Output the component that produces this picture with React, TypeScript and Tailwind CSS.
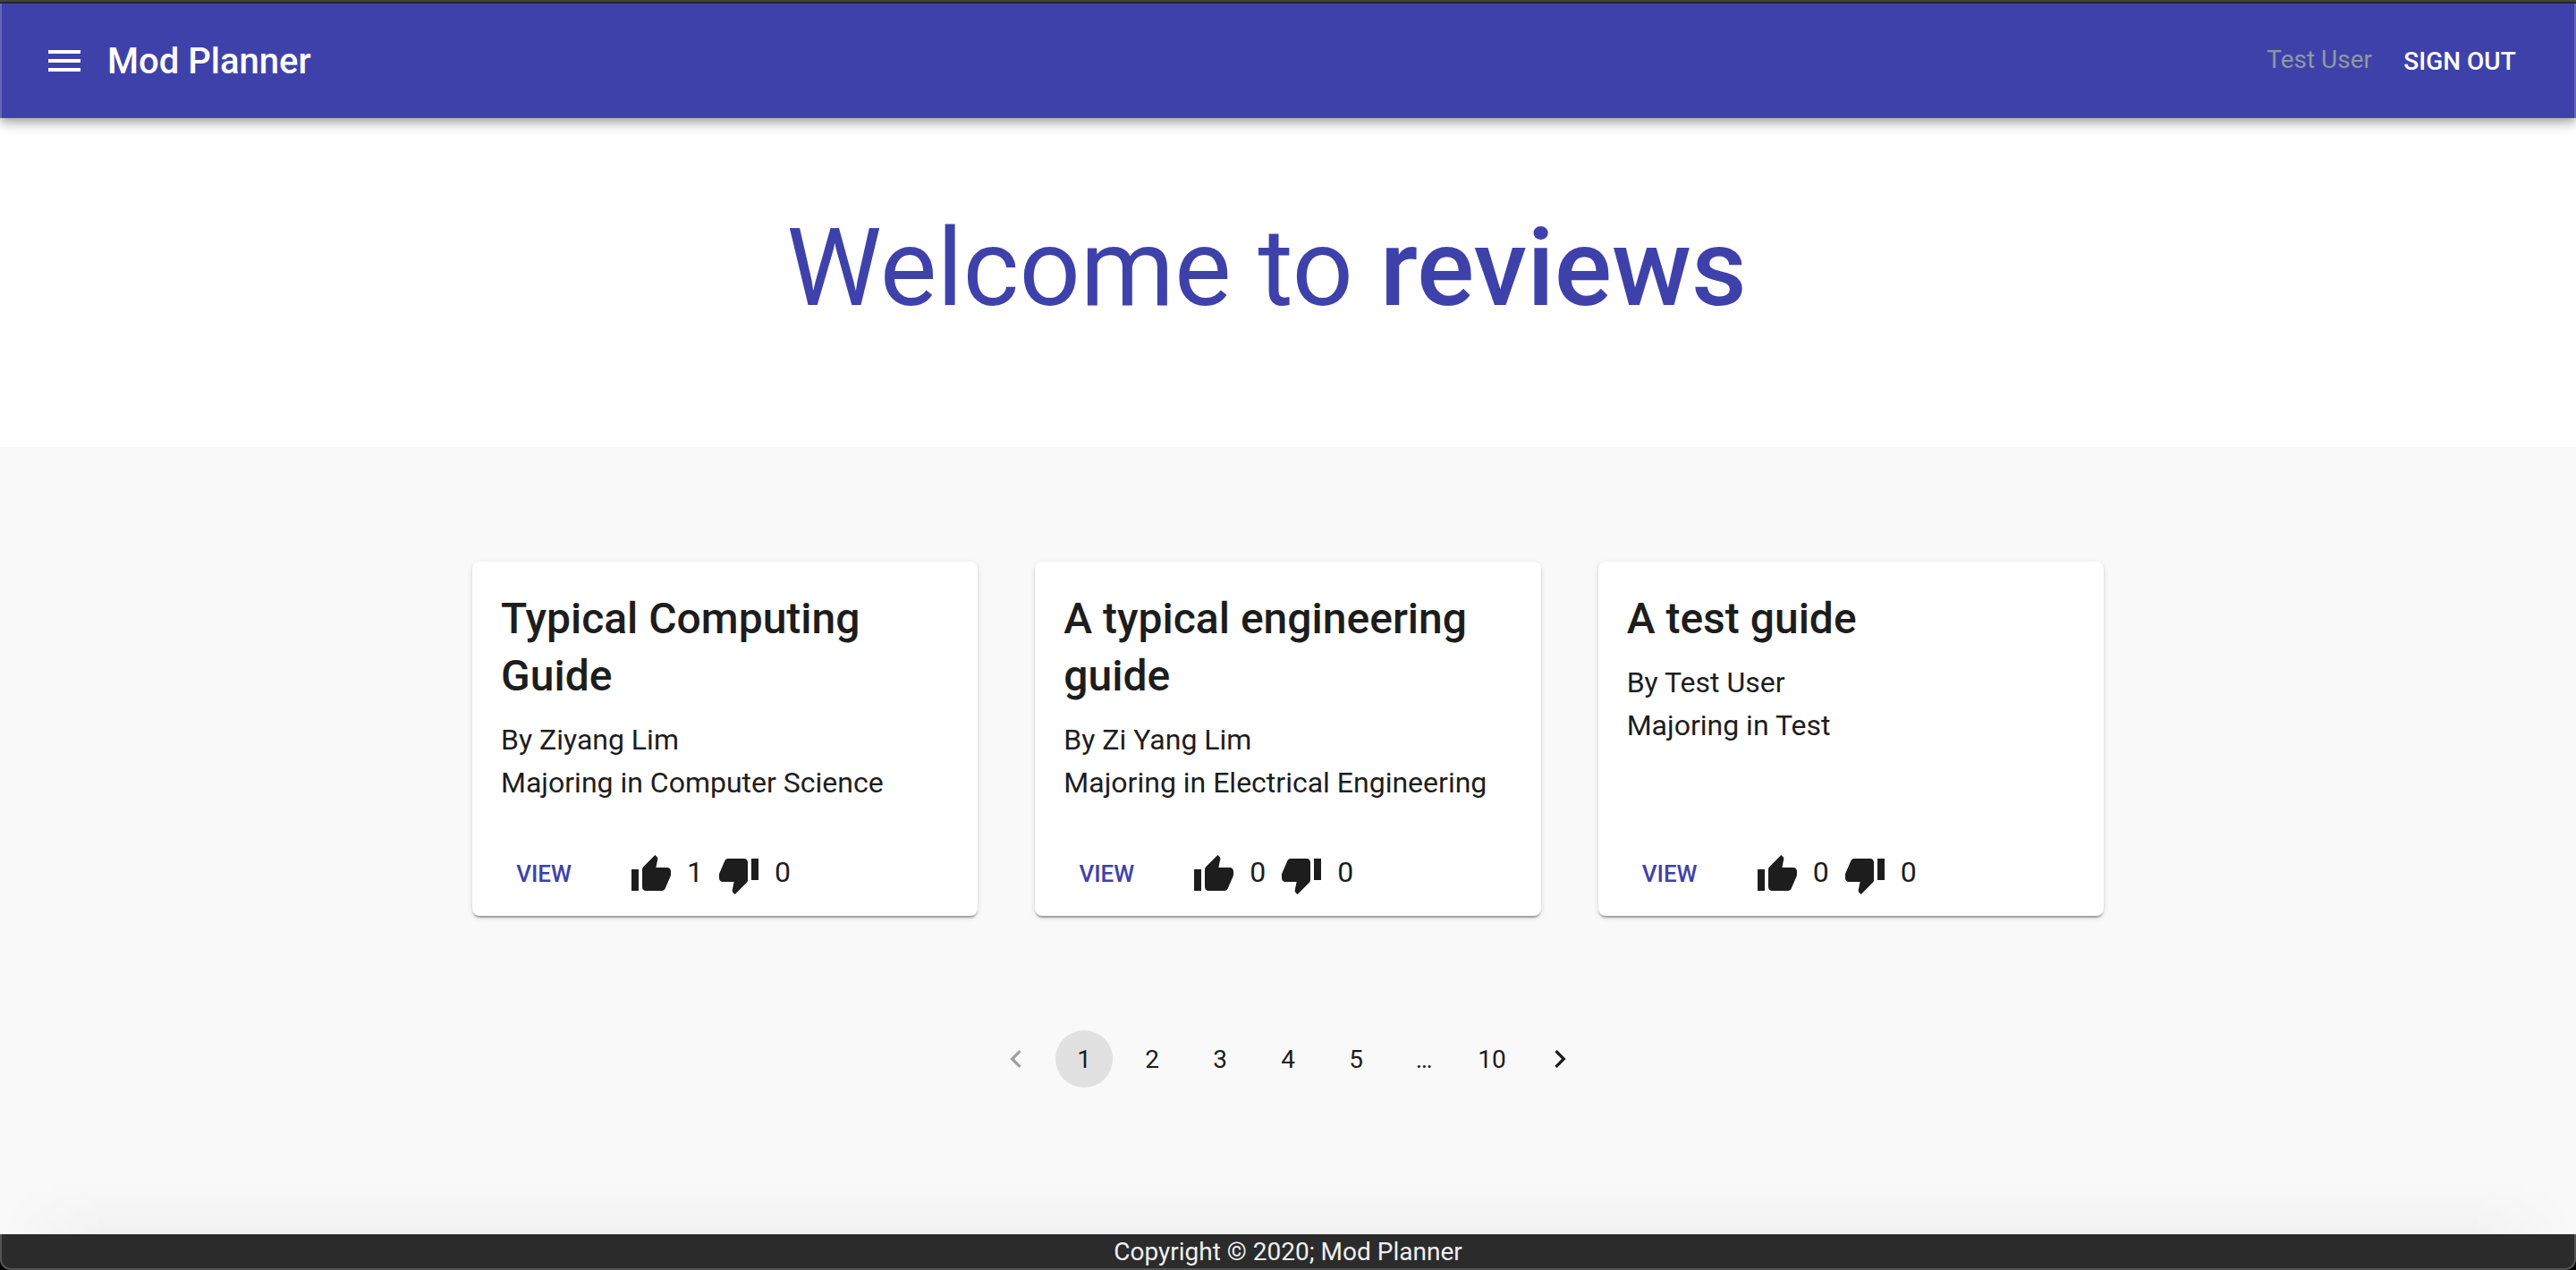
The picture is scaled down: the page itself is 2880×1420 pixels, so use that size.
import {
  MdMenu,
  MdNavigateBefore,
  MdNavigateNext,
  MdThumbDown,
  MdThumbUp,
} from "react-icons/md";

type Guide = {
  title: string;
  author: string;
  major: string;
  likes: number;
  dislikes: number;
};

const guides: Guide[] = [
  { title: "Typical Computing Guide", author: "Ziyang Lim", major: "Computer Science", likes: 1, dislikes: 0 },
  { title: "A typical engineering guide", author: "Zi Yang Lim", major: "Electrical Engineering", likes: 0, dislikes: 0 },
  { title: "A test guide", author: "Test User", major: "Test", likes: 0, dislikes: 0 },
];

const pages = ["1", "2", "3", "4", "5", "…", "10"];

function TopBar() {
  return (
    <header className="relative flex h-32 items-center border-x-2 border-white/20 bg-[#3f41ab] px-[46px] text-white shadow-[0_4px_8px_-2px_rgba(0,0,0,0.2),0_8px_10px_rgba(0,0,0,0.14),0_2px_20px_rgba(0,0,0,0.12)]">
      <button type="button" aria-label="Open menu">
        <MdMenu className="size-12" />
      </button>
      <span className="ml-6 grow pt-0.5 text-[40px] leading-16 font-medium">Mod Planner</span>
      <span className="pb-0.5 text-[28px] leading-10 text-[#8c9a9f]">Test User</span>
      <button type="button" className="ml-4 min-w-[164px] pt-0.5 text-[28px] leading-12 font-medium uppercase">
        Sign out
      </button>
    </header>
  );
}

function GuideCard({ guide }: { guide: Guide }) {
  return (
    <article className="flex flex-col rounded-lg bg-white shadow-[0_4px_2px_-2px_rgba(0,0,0,0.2),0_2px_2px_rgba(0,0,0,0.14),0_2px_6px_rgba(0,0,0,0.12)]">
      <div className="grow px-8 pt-8 pb-[33px]">
        <h2 className="mb-[15px] text-5xl leading-16 font-medium">{guide.title}</h2>
        <p className="text-[32px] leading-12">By {guide.author}</p>
        <p className="text-[32px] leading-12">Majoring in {guide.major}</p>
      </div>
      <div className="flex items-center gap-4 p-4">
        <button type="button" className="mr-4 h-15 w-32 pb-0.5 text-[26px] font-medium text-[#3f41ab] uppercase">
          View
        </button>
        <button type="button" aria-label="Like">
          <MdThumbUp className="size-12" />
        </button>
        <span className="pb-1.5 text-[32px] leading-12">{guide.likes}</span>
        <button type="button" aria-label="Dislike">
          <MdThumbDown className="size-12" />
        </button>
        <span className="pb-1.5 text-[32px] leading-12">{guide.dislikes}</span>
      </div>
    </article>
  );
}

function Pagination() {
  return (
    <nav aria-label="Pagination" className="mt-32 flex justify-center gap-3 text-[28px] leading-10">
      <button type="button" aria-label="Previous page" disabled className="grid size-16 place-items-center opacity-40">
        <MdNavigateBefore className="size-10" />
      </button>
      {pages.map((page) =>
        page === "…" ? (
          <span key={page} className="grid size-16 place-items-center pt-0.5">
            {page}
          </span>
        ) : (
          <button
            key={page}
            type="button"
            aria-current={page === "1" ? "page" : undefined}
            className="grid size-16 place-items-center rounded-full pt-0.5 aria-[current=page]:bg-[#e1e1e1]"
          >
            {page}
          </button>
        ),
      )}
      <button type="button" aria-label="Next page" className="grid size-16 place-items-center">
        <MdNavigateNext className="size-10" />
      </button>
    </nav>
  );
}

export default function App() {
  return (
    <div className="flex min-h-screen flex-col bg-[#f9f9f9] font-[Roboto,sans-serif] text-[#1d1d1d]">
      <div className="h-1 border-t-2 border-[#444444] bg-[#2b2b2b]" />
      <TopBar />
      <section className="bg-white px-12 pt-24 pb-32 text-center text-[#3f41ab]">
        <h1 className="pr-12 text-[120px] leading-36">
          Welcome to <b className="font-medium">reviews</b>
        </h1>
      </section>
      <main className="mx-auto w-full max-w-[1920px] grow px-12 pt-32 pb-26">
        <div className="grid grid-cols-3 gap-16">
          {guides.map((guide) => (
            <GuideCard key={guide.title} guide={guide} />
          ))}
        </div>
        <Pagination />
      </main>
      <div className="h-15 bg-linear-to-t from-black/3 to-transparent [mask-image:linear-gradient(to_right,transparent,black_120px,black_calc(100%-120px),transparent)]" />
      <div className="bg-black">
        <footer className="rounded-b-xl border-x-2 border-b-2 border-[#555555] bg-[#2b2b2b] pt-0.5 text-center text-[28px] leading-9 text-[#f0f0f0]">
          Copyright © 2020; Mod Planner
        </footer>
      </div>
    </div>
  );
}
